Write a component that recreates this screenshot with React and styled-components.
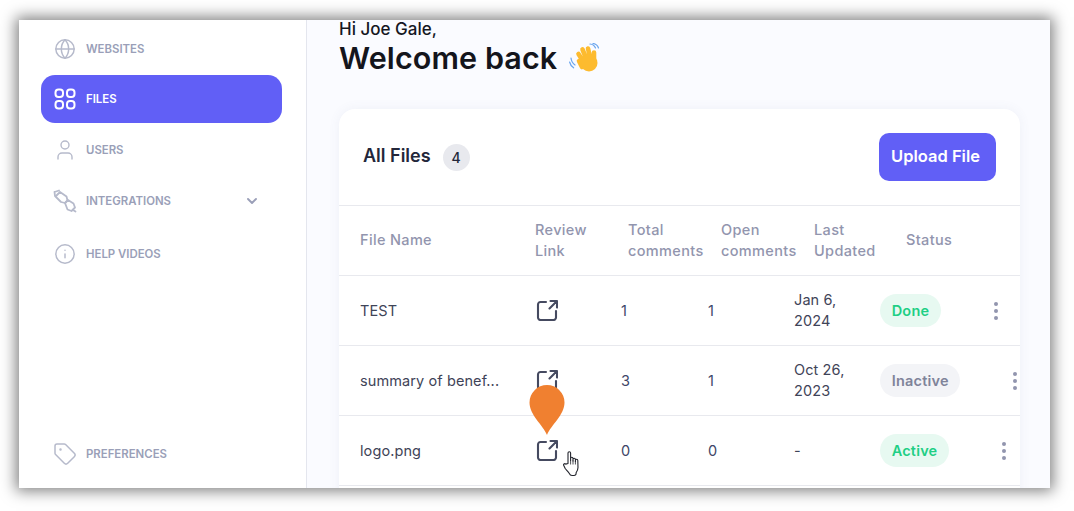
import React from "react";
import styled, { createGlobalStyle } from "styled-components";
import { Globe, User, Info, Tag, ChevronDown } from "lucide-react";

const Global = createGlobalStyle`
  html, body { margin: 0; padding: 0; background: #fff; }
  body { font-family: Inter, "Noto Sans", sans-serif; }
`;

const Page = styled.div`
  width: 1074px; height: 511px; box-sizing: border-box; padding: 20px 24px 23px 19px; overflow: hidden;
`;
const Frame = styled.div`
  display: flex; height: 468px; background: #fafbff; overflow: hidden;
  box-shadow: 0 0 14px 3px rgba(0,0,0,.5);
`;
const Sidebar = styled.nav`
  width: 288px; flex: none; box-sizing: border-box; background: #fff; border-right: 1px solid #e4e6ee;
  display: flex; flex-direction: column; gap: 3px; padding: 5px 24px 10px 22px;
`;
const NavItem = styled.div`
  height: 48px; flex: none; display: flex; align-items: center; gap: 10px; padding: 0 22px 0 13px; border-radius: 14px;
  background: ${p => (p.$active ? "#615ff6" : "transparent")};
  color: ${p => (p.$active ? "#fff" : "#9a9fb8")};
  font-size: 11.4px; line-height: 14px; font-weight: 600; margin-top: ${p => p.$mt || 0}px;
  ${p => p.$bottom && "margin-top: auto;"}
  svg { flex: none; }
`;
const NavIcon = styled.span`
  width: 22px; height: 22px; display: flex; align-items: center; justify-content: center; color: ${p => (p.$active ? "#fff" : "#b6bacb")};
`;
const NavLabel = styled.span` flex: 1; `;
const Main = styled.main`
  flex: 1; min-width: 0; padding: 0 30px 0 32px; display: flex; flex-direction: column;
`;
const Greeting = styled.div`
  font-size: 17px; font-weight: 500; color: #15171f; line-height: 20px; margin-top: -1px;
`;
const Title = styled.h1`
  margin: 1px 0 0; font-size: 30.5px; line-height: 36px; font-weight: 600; color: #14151c; display: flex; align-items: center; gap: 12px; letter-spacing: .1px;
`;
const Card = styled.section`
  margin-top: 33px; flex: none; height: 420px; background: #fff; border-radius: 16px 16px 0 0;
  box-shadow: 0 0 12px rgba(90,95,140,.07);
`;
const CardHead = styled.header`
  height: 97px; box-sizing: border-box; display: flex; align-items: center; padding: 0 24px; border-bottom: 1px solid #e8e9ee;
`;
const CardTitle = styled.h2`
  margin: 0 0 3px; font-size: 18px; font-weight: 600; color: #23273a;
`;
const Count = styled.span`
  width: 27px; height: 27px; border-radius: 50%; background: #e8e9ee; color: #23273a; margin-left: 12px;
  display: flex; align-items: center; justify-content: center; font-size: 14px; font-weight: 500;
`;
const Upload = styled.button`
  margin-left: auto; width: 117px; height: 48px; border: 0; border-radius: 10px; background: #615ff6; color: #fff;
  font: 600 16.5px Inter, sans-serif; padding: 0 4px 2px 0;
`;
const HeadRow = styled.div`
  height: 70px; box-sizing: border-box; border-bottom: 1px solid #e8e9ee; padding: 0 0 2px 21px;
  display: grid; grid-template-columns: 175px 93px 93px 93px 92px auto; align-items: center;
  font-size: 14.5px; letter-spacing: .35px; line-height: 21px; font-weight: 500; color: #9295ae;
`;
const Row = styled.div`
  height: 70px; box-sizing: border-box; border-bottom: 1px solid #e8e9ee; padding: 0 0 1px 21px;
  display: grid; grid-template-columns: 176px 85px 87px 86px 86px auto; align-items: center;
  font-size: 14.5px; line-height: 21px; font-weight: 400; color: #3f4458; letter-spacing: .1px;
`;
const Name = styled.div`
  white-space: nowrap;
`;
const LinkCell = styled.div`
  position: relative; height: 22px; color: #454a60;
  > svg:first-child { display: block; }
`;
const Num = styled.div`
  color: #3d4668;
`;
const StatusCell = styled.div`
  display: flex; align-items: center; width: 170px;
`;
const Pill = styled.span`
  height: 33px; box-sizing: border-box; border-radius: 17px; display: inline-flex; align-items: center; padding: 0 11.7px;
  font-size: 14.5px; font-weight: 600; flex: none; letter-spacing: .2px;
  background: ${p => (p.$kind === "Inactive" ? "#f3f4f7" : "#e7f9f1")};
  color: ${p => (p.$kind === "Inactive" ? "#80849a" : "#1fcf85")};
`;
const Dots = styled.span`
  display: flex; flex-direction: column; gap: 3px; margin: 1px 0 0 53px; flex: none;
  i { display: block; width: 4px; height: 4px; border-radius: 50%; background: #9295ae; }
`;
const Pin = styled.svg`
  position: absolute; left: -7px; top: -54px;
`;
const Cursor = styled.svg`
  position: absolute; left: 27px; top: 11px;
`;

const GridIcon = () => (
  <svg width="22" height="22" viewBox="0 0 22 22" fill="none" stroke="currentColor" strokeWidth="2">
    <rect x="1.5" y="1.5" width="7.5" height="7.5" rx="3" /><rect x="13" y="1.5" width="7.5" height="7.5" rx="3" />
    <rect x="1.5" y="13" width="7.5" height="7.5" rx="3" /><rect x="13" y="13" width="7.5" height="7.5" rx="3" />
  </svg>
);
const PlugIcon = () => (
  <svg width="24" height="24" viewBox="0 0 24 24" fill="none" stroke="currentColor" strokeWidth="1.8" strokeLinejoin="round" strokeLinecap="round">
    <path d="M1.5 3 6 1.5M2 7 1.5 3" />
    <path d="M2.5 7.5 7 3l6.5 4.500 1 4-2.500 2.500-4-1z" />
    <path d="M12 14l3-3 5.500 3.500 1.500 4-3.500 3.500-4-1.500z" />
    <path d="M20 21l2.500 1.500" />
  </svg>
);
const OpenIcon = () => (
  <svg width="22" height="22" viewBox="0 0 22 22" fill="none" stroke="currentColor" strokeWidth="2.1" strokeLinecap="round" strokeLinejoin="round">
    <path d="M10 3H4.500A2.500 2.500 0 0 0 2 5.500v13A2.500 2.500 0 0 0 4.500 21h13a2.500 2.500 0 0 0 2.500-2.500V12" />
    <path d="M14.500 2H21v6.500M20.500 2.500 13.500 9.500" />
  </svg>
);
const Wave = () => (
  <svg width="32" height="31" viewBox="0 0 32 31" fill="none">
    <g stroke="#fdbb2f" strokeWidth="4.6" strokeLinecap="round">
      <path d="M14 18 9.500 11M17 15l-3.500-8.500M21 14l-2-8.500M25 16l0-6.500M13 24l-3-6" />
    </g>
    <circle cx="20" cy="20" r="8.5" fill="#fdbb2f" />
    <path d="M12 18h13v6H14z" fill="#fdbb2f" />
    <path d="M2 15c.3 3 1.800 5.500 4 7M.6 19c.6 2.500 2 4.500 4 5.800M21 1c2.500.2 4.500 1.700 5.500 4M24 .4c2.500.4 4.600 2 5.500 4.600" stroke="#6aa5ee" strokeWidth="1.2" strokeLinecap="round" />
  </svg>
);
const Hand = () => (
  <Cursor width="18" height="27" viewBox="0 0 18 26" fill="#fff" stroke="#22242c" strokeWidth="1.1" strokeLinejoin="round">
    <path d="M5 13V2.500a1.300 1.300 0 0 1 2.600 0V10V8a1.200 1.200 0 0 1 2.400 0v2.500V9a1.200 1.200 0 0 1 2.400 0V11v-1a1.200 1.200 0 0 1 2.400 0l.2 7c0 2.500-1 4-2 5.500.5 1-.5 2.500-2 2.500H9c-2 0-2.500-1.500-3-2.500-1-1.500-2.600-3-3.800-4.500L.9 15.300c-1-1.500.8-2.700 1.800-1.700z" />
    <path d="M7.600 10v4M10 10v4M12.400 10.500V14" fill="none" strokeWidth=".8" />
  </Cursor>
);

const nav = [
  { label: "WEBSITES", icon: <Globe size={22} strokeWidth={1.6} /> },
  { label: "FILES", icon: <GridIcon />, active: true, mt: -1 },
  { label: "USERS", icon: <User size={24} strokeWidth={1.4} /> },
  { label: "INTEGRATIONS", icon: <PlugIcon />, more: true },
  { label: "HELP VIDEOS", icon: <Info size={22} strokeWidth={1.6} />, mt: 2 },
  { label: "PREFERENCES", icon: <Tag size={24} strokeWidth={1.5} />, bottom: true },
];

const rows = [
  { name: "TEST", total: 1, open: 1, updated: <>Jan 6,<br />2024</>, status: "Done" },
  { name: "summary of benef...", total: 3, open: 1, updated: <>Oct 26,<br />2023</>, status: "Inactive" },
  { name: "logo.png", total: 0, open: 0, updated: "-", status: "Active", pointer: true },
];

export default function App() {
  return (
    <Page>
      <Global />
      <Frame>
        <Sidebar>
          {nav.map(n => (
            <NavItem key={n.label} $active={n.active} $bottom={n.bottom} $mt={n.mt}>
              <NavIcon $active={n.active}>{n.icon}</NavIcon>
              <NavLabel>{n.label}</NavLabel>
              {n.more && <ChevronDown size={16} strokeWidth={2.8} color="#9a9fb8" />}
            </NavItem>
          ))}
        </Sidebar>
        <Main>
          <Greeting>Hi Joe Gale,</Greeting>
          <Title>Welcome back <Wave /></Title>
          <Card>
            <CardHead>
              <CardTitle>All Files</CardTitle>
              <Count>4</Count>
              <Upload>Upload File</Upload>
            </CardHead>
            <HeadRow>
              <div>File Name</div>
              <div>Review<br />Link</div>
              <div>Total<br />comments</div>
              <div>Open<br />comments</div>
              <div>Last<br />Updated</div>
              <div>Status</div>
            </HeadRow>
            {rows.map(r => (
              <Row key={r.name}>
                <Name>{r.name}</Name>
                <LinkCell>
                  <OpenIcon />
                  {r.pointer && (
                    <>
                      <Pin width="36" height="50" viewBox="0 0 36 50">
                        <path d="M18 50C14 40 .5 30 .5 17.500a17.500 17.500 0 0 1 35 0C35.500 30 22 40 18 50z" fill="#f08030" />
                      </Pin>
                      <Hand />
                    </>
                  )}
                </LinkCell>
                <Num>{r.total}</Num>
                <Num>{r.open}</Num>
                <div>{r.updated}</div>
                <StatusCell>
                  <Pill $kind={r.status}>{r.status}</Pill>
                  <Dots><i /><i /><i /></Dots>
                </StatusCell>
              </Row>
            ))}
          </Card>
        </Main>
      </Frame>
    </Page>
  );
}
